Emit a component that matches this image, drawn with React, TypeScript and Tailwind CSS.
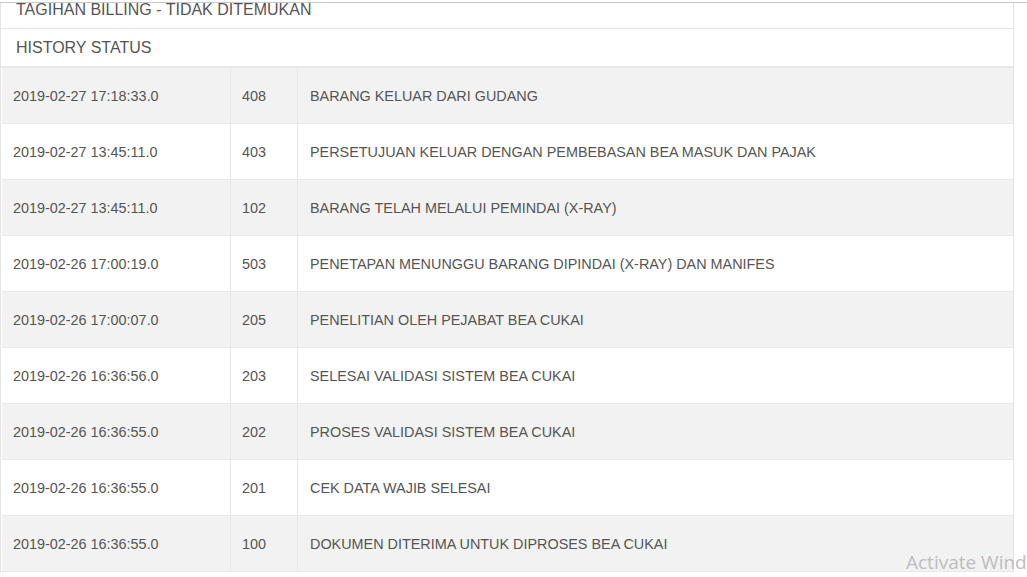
const rows = [
  ['2019-02-27 17:18:33.0', '408', 'BARANG KELUAR DARI GUDANG'],
  ['2019-02-27 13:45:11.0', '403', 'PERSETUJUAN KELUAR DENGAN PEMBEBASAN BEA MASUK DAN PAJAK'],
  ['2019-02-27 13:45:11.0', '102', 'BARANG TELAH MELALUI PEMINDAI (X-RAY)'],
  ['2019-02-26 17:00:19.0', '503', 'PENETAPAN MENUNGGU BARANG DIPINDAI (X-RAY) DAN MANIFES'],
  ['2019-02-26 17:00:07.0', '205', 'PENELITIAN OLEH PEJABAT BEA CUKAI'],
  ['2019-02-26 16:36:56.0', '203', 'SELESAI VALIDASI SISTEM BEA CUKAI'],
  ['2019-02-26 16:36:55.0', '202', 'PROSES VALIDASI SISTEM BEA CUKAI'],
  ['2019-02-26 16:36:55.0', '201', 'CEK DATA WAJIB SELESAI'],
  ['2019-02-26 16:36:55.0', '100', 'DOKUMEN DITERIMA UNTUK DIPROSES BEA CUKAI'],
];

export default function App() {
  return (
    <div className="relative h-[577px] w-[1027px] overflow-hidden bg-white font-['Liberation_Sans',Arial,sans-serif] text-[#555]">
      <div className="h-[2px]" />
      <div className="border-t border-[#c8c8c8]">
        <div className="w-[1014px] border-x border-[#e3e3e3]">
          {/* heading scrolled partly out of view */}
          <div className="h-[26px] overflow-hidden border-b border-[#e5e5e5]">
            <div className="-mt-[3px] pl-[15px] text-[16px] leading-[20px]">TAGIHAN BILLING - TIDAK DITEMUKAN</div>
          </div>
          <div className="flex h-[39px] items-center border-b-2 border-[#e8e8e8] pl-[15px] pt-[1px] text-[16px]">
            HISTORY STATUS
          </div>
          <div className="pl-px">
            {rows.map((r, i) => (
              <div
                key={i}
                className={`flex h-[56px] border-b border-[#e8e8e8] pt-[2px] text-[14.4px] ${i % 2 === 0 ? 'bg-[#f2f2f2]' : 'bg-white'}`}
              >
                <div className="-mt-[2px] flex w-[229px] items-center border-r border-[#e8e8e8] pl-[11px] pt-[2px]">{r[0]}</div>
                <div className="-mt-[2px] flex w-[67px] items-center border-r border-[#e8e8e8] pl-[11px] pt-[2px]">{r[1]}</div>
                <div className="flex flex-1 items-center pl-[12px]">{r[2]}</div>
              </div>
            ))}
          </div>
        </div>
      </div>
      <div className="absolute left-[906px] top-[548px] whitespace-nowrap font-['Open_Sans','Noto_Sans',sans-serif] text-[19px] text-[#bdbdbd]">
        Activate Windows
      </div>
    </div>
  );
}
